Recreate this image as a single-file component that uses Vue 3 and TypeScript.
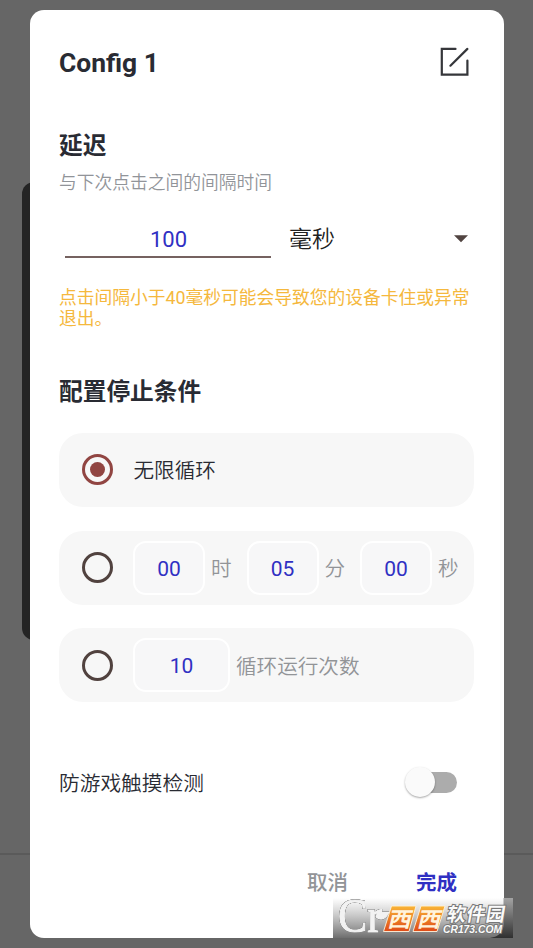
<script setup lang="ts">
import { ref } from 'vue'

interface TimePart {
  value: string
  unit: string
}

const selected = ref<number>(0)
const enabled = ref<boolean>(false)
const timeParts: TimePart[] = [
  { value: '00', unit: '时' },
  { value: '05', unit: '分' },
  { value: '00', unit: '秒' },
]
</script>

<template>
  <div class="screen">
    <div class="floating-bar"></div>
    <div class="divider"></div>
    <main class="dialog">
      <header class="head">
        <h1>Config 1</h1>
        <svg class="edit" viewBox="0 0 30 30" width="30" height="30">
          <path d="M15.5 1.9H1.8V27.6H27.4V13.5M27.4 1.9L10.4 18.7" />
        </svg>
      </header>

      <h2 class="delay-title">延迟</h2>
      <p class="hint">与下次点击之间的间隔时间</p>
      <div class="delay-row">
        <div class="delay-input">100</div>
        <div class="unit-select">
          <span>毫秒</span>
          <svg viewBox="0 0 14 8" width="14" height="8"><path d="M0 .3H14L7 7.3Z" /></svg>
        </div>
      </div>
      <p class="warning">点击间隔小于40毫秒可能会导致您的设备卡住或异常退出。</p>

      <h2 class="stop-title">配置停止条件</h2>
      <section class="options">
        <div class="option" @click="selected = 0">
          <i class="radio" :class="{ on: selected === 0 }"></i>
          <span class="option-label">无限循环</span>
        </div>
        <div class="option" @click="selected = 1">
          <i class="radio" :class="{ on: selected === 1 }"></i>
          <div v-for="(part, i) in timeParts" :key="i" class="time-part">
            <span class="box">{{ part.value }}</span>
            <span class="muted">{{ part.unit }}</span>
          </div>
        </div>
        <div class="option" @click="selected = 2">
          <i class="radio" :class="{ on: selected === 2 }"></i>
          <span class="box wide">10</span>
          <span class="muted">循环运行次数</span>
        </div>
      </section>

      <div class="switch-row" @click="enabled = !enabled">
        <span>防游戏触摸检测</span>
        <div class="switch" :class="{ active: enabled }"><i></i></div>
      </div>

      <footer class="actions">
        <button class="cancel">取消</button>
        <button class="done">完成</button>
      </footer>
    </main>

    <svg class="watermark" viewBox="0 0 180 40" width="180" height="40">
      <defs>
        <linearGradient id="shade" x1="0" y1="0" x2="0" y2="1">
          <stop offset="0" stop-color="#777" stop-opacity="0" />
          <stop offset="1" stop-color="#4a4a4a" stop-opacity=".8" />
        </linearGradient>
        <linearGradient id="shadeRight" x1="0" y1="0" x2="0" y2="1">
          <stop offset="0" stop-color="#a4a4a4" />
          <stop offset="1" stop-color="#303030" />
        </linearGradient>
        <linearGradient id="orange" x1="0" y1="0" x2="0" y2="1">
          <stop offset="0" stop-color="#f9b536" />
          <stop offset="1" stop-color="#df4a17" />
        </linearGradient>
      </defs>
      <rect width="180" height="40" fill="url(#shade)" />
      <path d="M170.5 0H180V40H157Q170.5 38 170.5 26Z" fill="url(#shadeRight)" />
      <g class="cr">
        <text x="5" y="34" font-size="48" textLength="44" lengthAdjust="spacingAndGlyphs">Cr</text>
        <path d="M43 18C46 11 50 16 56 14C53 21 48 23 43 19Z" />
      </g>
      <g fill="url(#orange)" stroke="#fff3dc" stroke-width=".9">
        <path d="M58.5 8H83L76 33.5H50.5Z" />
        <path d="M88 8H112L104 33.5H80Z" />
      </g>
      <g class="xixi">
        <text transform="translate(54 28.5) skewX(-14) scale(1.12 1)">西</text>
        <text transform="translate(83.5 28.5) skewX(-14) scale(1.12 1)">西</text>
      </g>
      <g class="site">
        <text transform="translate(113 22.5) skewX(-10)" font-size="19" textLength="58">软件园</text>
        <text class="domain" x="110" y="34.5" font-size="11" textLength="59" lengthAdjust="spacingAndGlyphs">CR173.COM</text>
      </g>
    </svg>
  </div>
</template>

<style>
body {
  background: #666;
  overflow: hidden;
}
</style>

<style scoped>
.screen {
  position: relative;
  box-sizing: border-box;
  width: 533px;
  height: 948px;
  padding: 10px 29.5px;
  overflow: hidden;
  background: #666;
  color: #292b33;
  font-family: Roboto, 'Noto Sans CJK SC', sans-serif;
}
.floating-bar {
  position: absolute;
  left: 22px;
  top: 182px;
  width: 60px;
  height: 458px;
  border-radius: 12px;
  background: #242424;
}
.divider {
  position: absolute;
  left: 0;
  top: 853px;
  width: 533px;
  height: 2px;
  background: #5a5a5a;
}
.dialog {
  position: relative;
  box-sizing: border-box;
  width: 474px;
  height: 927.5px;
  padding: 32px 30px 0 29.5px;
  border-radius: 14px;
  background: #fff;
}
h1, h2, p { margin: 0; }
.head {
  display: flex;
  align-items: center;
  justify-content: space-between;
  height: 40px;
}
h1 {
  font-size: 26.4px;
  font-weight: 700;
  line-height: 40px;
  padding-top: 2px;
}
.edit {
  margin-right: 4px;
  fill: none;
  stroke: #35363a;
  stroke-width: 2.2;
  stroke-linecap: round;
}
h2 {
  font-size: 23.7px;
  font-weight: 700;
  line-height: 36px;
}
.delay-title { margin-top: 46px; }
.hint {
  margin-top: 6px;
  font-size: 17.75px;
  line-height: 26px;
  color: #919499;
  font-weight: 350;
}
.delay-row {
  display: flex;
  align-items: flex-start;
  margin-top: 24px;
  height: 40px;
}
.delay-input {
  box-sizing: border-box;
  width: 206px;
  height: 38px;
  margin-left: 6px;
  padding-left: 1px;
  border-bottom: 2px solid #756260;
  color: #3030c3;
  font-size: 22px;
  line-height: 40px;
  text-align: center;
}
.unit-select {
  display: flex;
  flex: 1;
  align-items: center;
  justify-content: space-between;
  height: 37px;
  margin-left: 18px;
  padding-right: 6px;
  color: #202020;
  font-size: 23px;
  font-weight: 350;
}
.unit-select span {
  line-height: 36px;
  padding-top: 3px;
}
.unit-select svg { fill: #514441; }
.warning {
  margin-top: 28px;
  width: 416px;
  color: #f5b83d;
  font-size: 17.75px;
  line-height: 21px;
  font-weight: 400;
}
.stop-title { margin-top: 44px; }
.options {
  display: flex;
  flex-direction: column;
  gap: 23.75px;
  margin-top: 22.75px;
}
.option {
  box-sizing: border-box;
  display: flex;
  align-items: center;
  height: 74px;
  padding-left: 23px;
  border-radius: 24px;
  background: #f7f7f7;
  font-size: 20.6px;
  font-weight: 350;
}
.radio {
  box-sizing: border-box;
  display: flex;
  flex: none;
  width: 31px;
  height: 31px;
  margin-right: 20px;
  border: 3px solid #51423f;
  border-radius: 50%;
}
.radio.on { border-color: #914542; }
.radio.on::after {
  content: '';
  width: 15px;
  height: 15px;
  margin: auto;
  border-radius: 50%;
  background: #914542;
}
.option-label, .muted { padding-bottom: 1px; }
.option-label { margin-left: .5px; }
.time-part {
  display: flex;
  align-items: center;
  width: 114.25px;
}
.box {
  box-sizing: border-box;
  width: 72px;
  height: 54px;
  margin-right: 6px;
  border: 2px solid #fff;
  border-radius: 13px;
  background: #f7f7f8;
  color: #3030c3;
  font-size: 21px;
  font-weight: 400;
  line-height: 52px;
  text-align: center;
}
.box.wide { width: 97px; }
.muted { color: #929497; }
.switch-row {
  display: flex;
  align-items: center;
  justify-content: space-between;
  height: 40px;
  margin-top: 59.75px;
  padding-right: 16px;
  font-size: 20.7px;
  font-weight: 350;
}
.switch-row span { padding-bottom: 1px; }
.switch {
  display: flex;
  align-items: center;
  width: 47px;
  height: 21px;
  margin-right: 1px;
  border-radius: 11px;
  background: linear-gradient(#acacac, #acacac) right / 42px 21px no-repeat;
}
.switch i {
  flex: none;
  width: 30px;
  height: 30px;
  margin-left: -5px;
  border-radius: 50%;
  background: #fafafa;
  box-shadow: 0 1px 2px rgba(0, 0, 0, .35);
}
.switch.active i { margin-left: 20px; }
.actions {
  display: flex;
  justify-content: flex-end;
  gap: 68px;
  margin-top: 60.5px;
  padding-right: 16.5px;
}
button {
  padding: 0;
  border: 0;
  background: none;
  font: 700 20.5px/40px Roboto, 'Noto Sans CJK SC', sans-serif;
}
.cancel { color: #929497; font-weight: 500; }
.done { color: #3030c3; }
.watermark {
  position: absolute;
  left: 333px;
  top: 898px;
  overflow: visible;
}
.cr {
  fill: #f2f2f2;
  stroke: #f2f2f2;
  stroke-width: 1.2px;
  font-family: 'Liberation Serif', serif;
  filter: drop-shadow(0 0 .6px #444) drop-shadow(0 0 .6px #666);
}
.xixi {
  fill: #fff3dc;
  font: 700 21px 'Noto Sans CJK SC', sans-serif;
}
.site {
  fill: #fafafa;
  stroke: #777;
  stroke-width: 2px;
  paint-order: stroke;
  font-family: 'Noto Sans CJK SC', sans-serif;
  font-weight: 700;
}
.domain {
  font-family: 'Liberation Sans', sans-serif;
  font-style: italic;
}
</style>
